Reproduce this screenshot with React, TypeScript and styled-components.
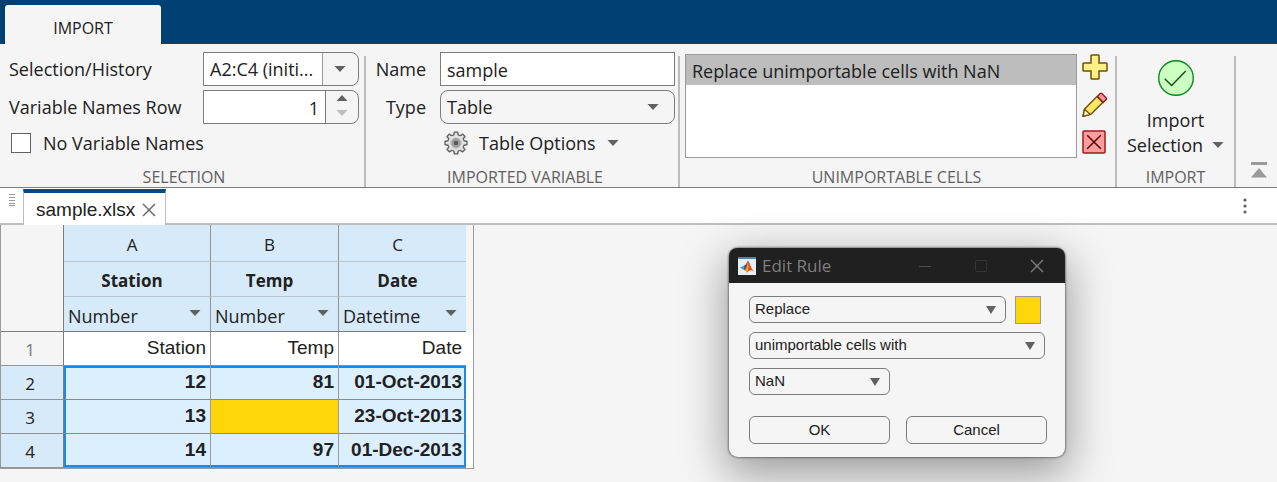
import React, { useState } from 'react';
import styled, { createGlobalStyle, css } from 'styled-components';

const ui = `"Open Sans", "Noto Sans", sans-serif`;
const sans = `"Liberation Sans", Arial, sans-serif`;

const Global = createGlobalStyle`
  *, *::before, *::after { box-sizing: border-box; }
  body {
    margin: 0;
    min-height: 100vh;
    background: #f5f5f5;
    color: #212121;
    font-family: ${ui};
    font-size: 18px;
    line-height: 24px;
  }
  button, input, select { font: inherit; color: inherit; margin: 0; }
  button { padding: 0; border: 0; background: none; }
  svg { display: block; }
`;

const Screen = styled.div`
  position: relative;
  min-height: 100vh;
  overflow: hidden;
`;

/* ---------- Toolstrip ---------- */

const TabStrip = styled.nav`
  display: flex;
  height: 44px;
  padding: 5px 5px 0;
  background: #004073;
`;

const StripTab = styled.button`
  width: 156px;
  padding-top: 7px;
  border-radius: 3px 3px 0 0;
  background: #f5f5f5;
  font-size: 16px;
`;

const Ribbon = styled.div`
  display: flex;
  border-bottom: 1px solid #7d7d7d;
`;

const Section = styled.section<{ $width: number; $pad: string }>`
  display: flex;
  flex: none;
  flex-direction: column;
  width: ${p => p.$width}px;
  padding: ${p => p.$pad};
  background: linear-gradient(#bdbdbd, #bdbdbd) right bottom / 2px calc(100% - 12px) no-repeat;
`;

const SectionTitle = styled.h2`
  margin: 9px 0 0;
  color: #616161;
  font-size: 16px;
  font-weight: 400;
  line-height: 20px;
  text-align: center;
`;

const Fields = styled.div<{ $columns: string; $gap?: number }>`
  display: grid;
  grid-template-columns: ${p => p.$columns};
  grid-template-rows: 34px 34px 30px;
  gap: 4px ${p => p.$gap ?? 0}px;
  align-items: center;
`;

const Label = styled.label<{ $end?: boolean }>`
  text-align: ${p => (p.$end ? 'right' : 'left')};
  white-space: nowrap;
`;

const CheckLabel = styled.label`
  display: flex;
  grid-column: 1 / -1;
  align-items: center;
  gap: 12px;
  padding-left: 2px;
`;

const Check = styled.input`
  width: 20px;
  height: 20px;
  appearance: none;
  border: 1px solid #616161;
  background: #fff;
`;

const SelectBox = styled.span<{ $dialog?: boolean; $width?: string }>`
  display: grid;
  grid-template-columns: 1fr auto;
  align-items: center;
  width: ${p => p.$width ?? '100%'};
  height: ${p => (p.$dialog ? 27 : 34)}px;
  border: 1px solid #7d7d7d;
  border-radius: ${p => (p.$dialog ? 6 : 8)}px;
  > select { grid-area: 1 / 1 / 2 / 3; }
  > svg { grid-area: 1 / 2; margin-right: ${p => (p.$dialog ? 9 : 15)}px; pointer-events: none; }
`;

const Select = styled.select<{ $dialog?: boolean }>`
  width: 100%;
  height: 100%;
  padding: ${p => (p.$dialog ? '0 5px 2px' : '0 6px')};
  appearance: none;
  border: 0;
  background: none;
  font-family: ${p => (p.$dialog ? sans : ui)};
  font-size: ${p => (p.$dialog ? 15 : 18)}px;
`;

const SplitBox = styled.span<{ $side: number }>`
  display: grid;
  grid-template-columns: 1fr ${p => p.$side}px;
  height: 34px;
  overflow: hidden;
  border: 1px solid #7d7d7d;
  border-radius: 0 8px 8px 0;
  background: #f5f5f5;
  > select { grid-area: 1 / 1 / 2 / 3; background: linear-gradient(#fff, #fff) left / calc(100% - ${p => p.$side}px) 100% no-repeat; }
  > svg { grid-area: 1 / 2; place-self: center; pointer-events: none; }
`;

const SplitRule = styled.span`
  grid-area: 1 / 2;
  width: 1px;
  background: #9a9a9a;
`;

const NumberInput = styled.input`
  min-width: 0;
  padding: 2px 6px 0;
  border: 0;
  background: #fff;
  text-align: right;
`;

const Stepper = styled.span`
  display: grid;
  grid-template-rows: 1fr 1fr;
  padding-bottom: 3px;
  border-left: 1px solid #7d7d7d;
`;

const StepButton = styled.button`
  display: grid;
  place-items: center;
`;

const TextInput = styled.input`
  width: 100%;
  height: 34px;
  padding: 2px 6px 0;
  border: 1px solid #7d7d7d;
  background: #fff;
`;

const OptionsButton = styled.button`
  display: flex;
  grid-column: 2;
  align-items: center;
  gap: 11px;
  padding-left: 4px;
`;

const RuleArea = styled.div`
  display: flex;
  gap: 5px;
  height: 106px;
  padding-top: 2px;
`;

const RuleList = styled.ul`
  flex: 1;
  height: 104px;
  margin: 0;
  padding: 0;
  border: 1px solid #9a9a9a;
  background: #fff;
  list-style: none;
`;

const RuleItem = styled.li`
  height: 30px;
  padding: 4px 6px 0;
  background: #bdbdbd;
`;

const RuleActions = styled.div`
  display: grid;
  grid-template-rows: repeat(3, 26px);
  gap: 12px;
`;

const ImportButton = styled.button`
  display: flex;
  flex-direction: column;
  align-items: center;
  height: 106px;
  padding-top: 8px;
`;

const ButtonLine = styled.span<{ $top: number }>`
  display: flex;
  align-items: center;
  gap: 9px;
  margin-top: ${p => p.$top}px;
`;

const Collapse = styled.button`
  align-self: flex-end;
  height: 18px;
  margin: 0 9px 8px auto;
`;

/* ---------- Document tabs ---------- */

const DocBar = styled.nav`
  display: flex;
  height: 37px;
  background: linear-gradient(#bdbdbd, #bdbdbd) bottom / 100% 2px no-repeat #fff;
`;

const Grip = styled.span`
  padding: 5px 7px 0 8px;
`;

const DocTab = styled.div`
  display: flex;
  align-items: center;
  gap: 7px;
  height: 36px;
  margin-top: 1px;
  padding: 1px 9px 0 12px;
  border: solid #bdbdbd;
  border-width: 4px 1px 0;
  border-top-color: #004b87;
  background: #fff;
  font: 19px/32px ${sans};
`;

const IconButton = styled.button`
  display: grid;
  place-items: center;
`;

const MoreButton = styled(IconButton)`
  width: 20px;
  margin: 0 22px 2px auto;
`;

/* ---------- Sheet ---------- */

const SheetFrame = styled.div`
  width: max-content;
  padding-right: 7px;
  border: solid #9a9a9a;
  border-width: 0 1px 1px;
  background: #f5f5f5 linear-gradient(#fff, #fff) bottom / 100% 137px no-repeat;
`;

const Sheet = styled.table`
  width: 465px;
  table-layout: fixed;
  border-collapse: separate;
  border-spacing: 0;
`;

const Corner = styled.td`
  border-right: 1px solid #7d7d7d;
  border-bottom: 1px solid #7d7d7d;
  background: #f5f5f5;
`;

const HeadCell = styled.th<{ $last?: boolean; $bold?: boolean; $final?: boolean }>`
  height: 35px;
  padding: ${p => (p.$final ? '3px 0 0' : '3px 10px 0 0')};
  border-right: ${p => (p.$last ? 0 : 1)}px solid #8f9499;
  border-bottom: 1px solid ${p => (p.$final ? '#7d7d7d' : '#bdc4cb')};
  background: #d7eafa;
  font-size: ${p => (p.$bold ? 17 : 18)}px;
  font-weight: ${p => (p.$bold ? 700 : 400)};
  text-align: center;
  vertical-align: middle;
`;

const LetterCell = styled(HeadCell)`
  height: 37px;
  font-size: 17px;
`;

const TypeBox = styled.span`
  display: grid;
  grid-template-columns: 1fr auto;
  align-items: center;
  height: 28px;
  > select { grid-area: 1 / 1 / 2 / 3; padding: 0 4px; }
  > svg { grid-area: 1 / 2; margin: 0 9px 5px 0; pointer-events: none; }
`;

const RowHead = styled.th<{ $on?: boolean }>`
  height: 34px;
  padding: 3px 4px 0 0;
  border-right: 1px solid #7d7d7d;
  border-bottom: 1px solid #8f9499;
  background: ${p => (p.$on ? '#d7eafa' : '#f5f5f5')};
  color: ${p => (p.$on ? '#212121' : '#757575')};
  font-size: 17px;
  font-weight: 400;
`;

const edges = { top: '0 2px', bottom: '0 -2px', left: '2px 0', right: '-2px 0' };
type Edge = keyof typeof edges;

const Cell = styled.td<{ $on?: boolean; $bad?: boolean; $last?: boolean; $edges: Edge[] }>`
  height: 34px;
  padding: 0 4px 1px 0;
  border-right: ${p => (p.$last ? 0 : 1)}px solid #9a9a9a;
  border-bottom: 1px solid #8a8a8a;
  background: #fff;
  font: 19px/24px ${sans};
  text-align: right;
  ${p => p.$on && css`background: #dceffe; font-weight: 700;`}
  ${p => p.$bad && css`background: #ffd60a;`}
  ${p => p.$edges.length > 0 && css`box-shadow: ${p.$edges.map(e => `inset ${edges[e]} 0 #1e88e5`).join(', ')};`}
`;

/* ---------- Edit Rule window ---------- */

const Dialog = styled.section`
  position: absolute;
  top: 248px;
  left: 729px;
  width: 336px;
  overflow: visible;
  border-radius: 9px;
  background: #f5f5f5;
  box-shadow: 0 0 2px 1px rgba(0, 0, 0, 0.4), 0 14px 44px 4px rgba(0, 0, 0, 0.36);
  font: 15px/20px ${sans};
`;

const DialogTitle = styled.header`
  display: flex;
  align-items: center;
  height: 35px;
  padding: 0 21px 0 9px;
  border-radius: 8px 8px 0 0;
  background: #202020;
`;

const DialogName = styled.h1`
  flex: 1;
  margin: 0 0 0 6px;
  color: #7f7f7f;
  font: 400 17px/24px ${ui};
`;

const WindowButtons = styled.div`
  display: flex;
  gap: 42px;
`;

const DialogBody = styled.div`
  display: flex;
  flex-direction: column;
  gap: 9px;
  padding: 13px 18px 14px 20px;
`;

const DialogRow = styled.div<{ $gap: number; $top?: number }>`
  display: flex;
  gap: ${p => p.$gap}px;
  height: 27px;
  margin-top: ${p => p.$top ?? 0}px;
`;

const Swatch = styled.button`
  width: 26px;
  height: 28px;
  border: 1px solid #9a9a9a;
  background: #ffd60a;
`;

const PushButton = styled.button`
  width: 141px;
  height: 28px;
  border: 1px solid #7d7d7d;
  border-radius: 6px;
`;

/* ---------- Icons ---------- */

const Caret = ({ up, faint }: { up?: boolean; faint?: boolean }) => (
  <svg width="12" height="6" viewBox="0 0 12 6" aria-hidden="true">
    <path d={up ? 'M0.5 6L6 0L11.5 6Z' : 'M0.5 0L6 6L11.5 0Z'} fill={faint ? '#bdbdbd' : '#616161'} />
  </svg>
);

const DialogCaret = () => (
  <svg width="10" height="8" viewBox="0 0 10 8" aria-hidden="true">
    <path d="M0 0H10L5 8Z" fill="#616161" />
  </svg>
);

const TEETH = [0, 45, 90, 135, 180, 225, 270, 315];

const GearIcon = () => (
  <svg width="24" height="24" viewBox="0 0 24 24" aria-hidden="true">
    <g fill="#616161">
      {TEETH.map(a => <path key={a} d="M8.9 4.4L9.8 0.4H14.2L15.1 4.4Z" transform={`rotate(${a} 12 12)`} />)}
      <circle cx="12" cy="12" r="9" />
    </g>
    <g fill="#e4e4e4">
      {TEETH.map(a => <path key={a} d="M10.2 5.4L11 1.7H13L13.8 5.4Z" transform={`rotate(${a} 12 12)`} />)}
      <circle cx="12" cy="12" r="7.7" />
    </g>
    <circle cx="12" cy="12" r="5.8" fill="#bdbdbd" />
    <circle cx="12" cy="12" r="4.4" fill="#9a9a9a" />
    <circle cx="12" cy="12" r="2.2" fill="#5a5a5a" />
  </svg>
);

const PlusIcon = () => (
  <svg width="26" height="26" viewBox="0 0 26 26" aria-hidden="true">
    <path d="M9.8 1H16.2Q17 1 17 1.8V9H24.2Q25 9 25 9.8V16.2Q25 17 24.2 17H17V24.2Q17 25 16.2 25H9.8Q9 25 9 24.2V17H1.8Q1 17 1 16.2V9.8Q1 9 1.8 9H9V1.8Q9 1 9.8 1Z" fill="#fff08a" stroke="#6d5200" strokeWidth="1.5" />
  </svg>
);

const PencilIcon = () => (
  <svg width="26" height="26" viewBox="0 0 26 26" strokeWidth="1.4" strokeLinejoin="round" aria-hidden="true">
    <path d="M2.6 17L15 4.6L20.8 10.4L8.6 22.4L1 24.4Z" fill="#ffe766" stroke="#6d5200" />
    <path d="M2.6 17.2L8.4 22.4L1 24.4Z" fill="#fff9d6" stroke="#6d5200" />
    <path d="M15.4 4.4L18.2 1.6Q19 0.8 19.8 1.6L24.2 6Q25 6.8 24.2 7.6L21.2 10.6Z" fill="#ff9494" stroke="#8c1c1c" />
  </svg>
);

const DeleteIcon = () => (
  <svg width="26" height="26" viewBox="0 0 26 26" aria-hidden="true">
    <rect x="1" y="1" width="22" height="22" rx="1" fill="#ff9c9c" stroke="#a11a1a" strokeWidth="1.5" />
    <path d="M5.2 5.2L18.8 18.8M18.8 5.2L5.2 18.8" stroke="#4a0808" strokeWidth="1.5" />
  </svg>
);

const CheckIcon = () => (
  <svg width="36" height="36" viewBox="0 0 36 36" fill="none" aria-hidden="true">
    <circle cx="18" cy="18" r="17.3" fill="#ccffc2" stroke="#0c8a1e" strokeWidth="1.4" />
    <path d="M6.7 18.7L13.6 25.4L27.8 11" stroke="#0a4d12" strokeWidth="1.4" />
  </svg>
);

const CollapseIcon = () => (
  <svg width="18" height="18" viewBox="0 0 18 18" fill="#9a9a9a" aria-hidden="true">
    <path d="M1 1H17V4H1ZM9 7L17 16.5H1Z" />
  </svg>
);

const GripIcon = () => (
  <svg width="8" height="13" viewBox="0 0 8 13" fill="#9a9a9a" aria-hidden="true">
    {[0, 3, 6, 9, 11].map(y => <path key={y} d={`M1 ${y + 1}H7V${y + 2}H1Z`} />)}
  </svg>
);

const CrossIcon = ({ color = '#616161' }: { color?: string }) => (
  <svg width="14" height="14" viewBox="0 0 14 14" aria-hidden="true">
    <path d="M1 1L13 13M13 1L1 13" stroke={color} strokeWidth="1.4" />
  </svg>
);

const MoreIcon = () => (
  <svg width="4" height="16" viewBox="0 0 4 16" fill="#616161" aria-hidden="true">
    <circle cx="2" cy="2" r="1.6" /><circle cx="2" cy="8" r="1.6" /><circle cx="2" cy="14" r="1.6" />
  </svg>
);

const MinimizeIcon = () => (
  <svg width="14" height="14" viewBox="0 0 14 14" aria-hidden="true">
    <path d="M1 7.5H13" stroke="#4d4d4d" />
  </svg>
);

const MaximizeIcon = () => (
  <svg width="14" height="14" viewBox="0 0 14 14" fill="none" aria-hidden="true">
    <rect x="1.5" y="1.5" width="11" height="11" rx="1" stroke="#363636" />
  </svg>
);

const MatlabIcon = () => (
  <svg width="18" height="18" viewBox="0 0 18 18" aria-hidden="true">
    <rect width="18" height="18" fill="#e9eef4" />
    <rect width="18" height="2" fill="#4f83b5" />
    <path d="M2 10.5L6.5 8.5L8.6 11L6 13Z" fill="#4f95c8" />
    <path d="M6.5 8.5Q8.5 7.5 9.6 4L10 9L8 12.4L6 13Z" fill="#27527f" />
    <path d="M9.6 3.6Q11 4 12.4 8.6Q13.6 12.6 16 14.4Q13 12.4 11.4 13.6L9 15.6Q8 12.8 6 13Q8.4 11 9.6 3.6Z" fill="#d9531e" />
    <path d="M9.8 5Q11.4 9 10 13.8L9 15.6Q8.2 13.4 7 13Q9.2 11 9.8 5Z" fill="#f2a13a" />
  </svg>
);

/* ---------- Data ---------- */

const columns = [
  { letter: 'A', name: 'Station', type: 'Number' },
  { letter: 'B', name: 'Temp', type: 'Number' },
  { letter: 'C', name: 'Date', type: 'Datetime' },
];

const rows = [
  ['Station', 'Temp', 'Date'],
  ['12', '81', '01-Oct-2013'],
  ['13', '', '23-Oct-2013'],
  ['14', '97', '01-Dec-2013'],
];

function selectionEdges(row: number, col: number): Edge[] {
  const found: Edge[] = [];
  if (row === 0) return found;
  if (row === 1) found.push('top');
  if (row === rows.length - 1) found.push('bottom');
  if (col === 0) found.push('left');
  if (col === columns.length - 1) found.push('right');
  return found;
}

const DialogSelect = ({ label, value, width }: { label: string; value: string; width: string }) => (
  <SelectBox $dialog $width={width}>
    <Select $dialog aria-label={label}><option>{value}</option></Select>
    <DialogCaret />
  </SelectBox>
);

export default function App() {
  const [namesRow, setNamesRow] = useState(1);
  const [name, setName] = useState('sample');

  return (
    <Screen>
      <Global />
      <TabStrip><StripTab>IMPORT</StripTab></TabStrip>

      <Ribbon>
        <Section $width={366} $pad="8px 7px 0 9px">
          <Fields $columns="1fr 156px">
            <Label htmlFor="history">Selection/History</Label>
            <SplitBox $side={36}>
              <Select id="history"><option>A2:C4 (initi...</option></Select>
              <SplitRule />
              <Caret />
            </SplitBox>
            <Label htmlFor="names-row">Variable Names Row</Label>
            <SplitBox $side={33}>
              <NumberInput id="names-row" inputMode="numeric" value={namesRow} onChange={e => setNamesRow(Number(e.target.value) || 1)} />
              <Stepper>
                <StepButton aria-label="Increase" onClick={() => setNamesRow(n => n + 1)}><Caret up /></StepButton>
                <StepButton aria-label="Decrease" onClick={() => setNamesRow(n => Math.max(1, n - 1))}><Caret faint={namesRow === 1} /></StepButton>
              </Stepper>
            </SplitBox>
            <CheckLabel><Check type="checkbox" />No Variable Names</CheckLabel>
          </Fields>
          <SectionTitle>SELECTION</SectionTitle>
        </Section>

        <Section $width={314} $pad="8px 5px 0 9px">
          <Fields $columns="1fr 235px" $gap={14}>
            <Label htmlFor="var-name" $end>Name</Label>
            <TextInput id="var-name" value={name} onChange={e => setName(e.target.value)} />
            <Label htmlFor="var-type" $end>Type</Label>
            <SelectBox>
              <Select id="var-type"><option>Table</option></Select>
              <Caret />
            </SelectBox>
            <OptionsButton><GearIcon />Table Options<Caret /></OptionsButton>
          </Fields>
          <SectionTitle>IMPORTED VARIABLE</SectionTitle>
        </Section>

        <Section $width={437} $pad="8px 9px 0 5px">
          <RuleArea>
            <RuleList><RuleItem>Replace unimportable cells with NaN</RuleItem></RuleList>
            <RuleActions>
              <IconButton aria-label="Add rule"><PlusIcon /></IconButton>
              <IconButton aria-label="Edit rule"><PencilIcon /></IconButton>
              <IconButton aria-label="Delete rule"><DeleteIcon /></IconButton>
            </RuleActions>
          </RuleArea>
          <SectionTitle>UNIMPORTABLE CELLS</SectionTitle>
        </Section>

        <Section $width={119} $pad="8px 2px 0 0">
          <ImportButton>
            <CheckIcon />
            <ButtonLine $top={12}>Import</ButtonLine>
            <ButtonLine $top={1}>Selection<Caret /></ButtonLine>
          </ImportButton>
          <SectionTitle>IMPORT</SectionTitle>
        </Section>

        <Collapse aria-label="Minimize toolstrip"><CollapseIcon /></Collapse>
      </Ribbon>

      <DocBar>
        <Grip><GripIcon /></Grip>
        <DocTab>
          sample.xlsx
          <IconButton aria-label="Close sample.xlsx"><CrossIcon /></IconButton>
        </DocTab>
        <MoreButton aria-label="More actions"><MoreIcon /></MoreButton>
      </DocBar>

      <SheetFrame>
        <Sheet>
          <colgroup>
            <col width="63" /><col width="147" /><col width="128" /><col width="127" />
          </colgroup>
          <thead>
            <tr>
              <Corner rowSpan={3} />
              {columns.map((c, i) => <LetterCell key={c.letter} $last={i === 2}>{c.letter}</LetterCell>)}
            </tr>
            <tr>
              {columns.map((c, i) => <HeadCell key={c.letter} $bold $last={i === 2}>{c.name}</HeadCell>)}
            </tr>
            <tr>
              {columns.map((c, i) => (
                <HeadCell key={c.letter} $final $last={i === 2}>
                  <TypeBox>
                    <Select aria-label={`${c.name} type`}><option>{c.type}</option></Select>
                    <Caret />
                  </TypeBox>
                </HeadCell>
              ))}
            </tr>
          </thead>
          <tbody>
            {rows.map((row, r) => (
              <tr key={r}>
                <RowHead $on={r > 0}>{r + 1}</RowHead>
                {row.map((value, c) => (
                  <Cell key={c} $on={r > 0} $bad={value === ''} $last={c === 2} $edges={selectionEdges(r, c)}>{value}</Cell>
                ))}
              </tr>
            ))}
          </tbody>
        </Sheet>
      </SheetFrame>

      <Dialog role="dialog" aria-label="Edit Rule">
        <DialogTitle>
          <MatlabIcon />
          <DialogName>Edit Rule</DialogName>
          <WindowButtons>
            <IconButton aria-label="Minimize"><MinimizeIcon /></IconButton>
            <IconButton aria-label="Maximize"><MaximizeIcon /></IconButton>
            <IconButton aria-label="Close"><CrossIcon color="#7f7f7f" /></IconButton>
          </WindowButtons>
        </DialogTitle>
        <DialogBody>
          <DialogRow $gap={9}>
            <DialogSelect label="Action" value="Replace" width="257px" />
            <Swatch aria-label="Highlight colour" />
          </DialogRow>
          <DialogRow $gap={0}><DialogSelect label="Condition" value="unimportable cells with" width="296px" /></DialogRow>
          <DialogRow $gap={0}><DialogSelect label="Replacement" value="NaN" width="141px" /></DialogRow>
          <DialogRow $gap={16} $top={12}>
            <PushButton>OK</PushButton>
            <PushButton>Cancel</PushButton>
          </DialogRow>
        </DialogBody>
      </Dialog>
    </Screen>
  );
}
